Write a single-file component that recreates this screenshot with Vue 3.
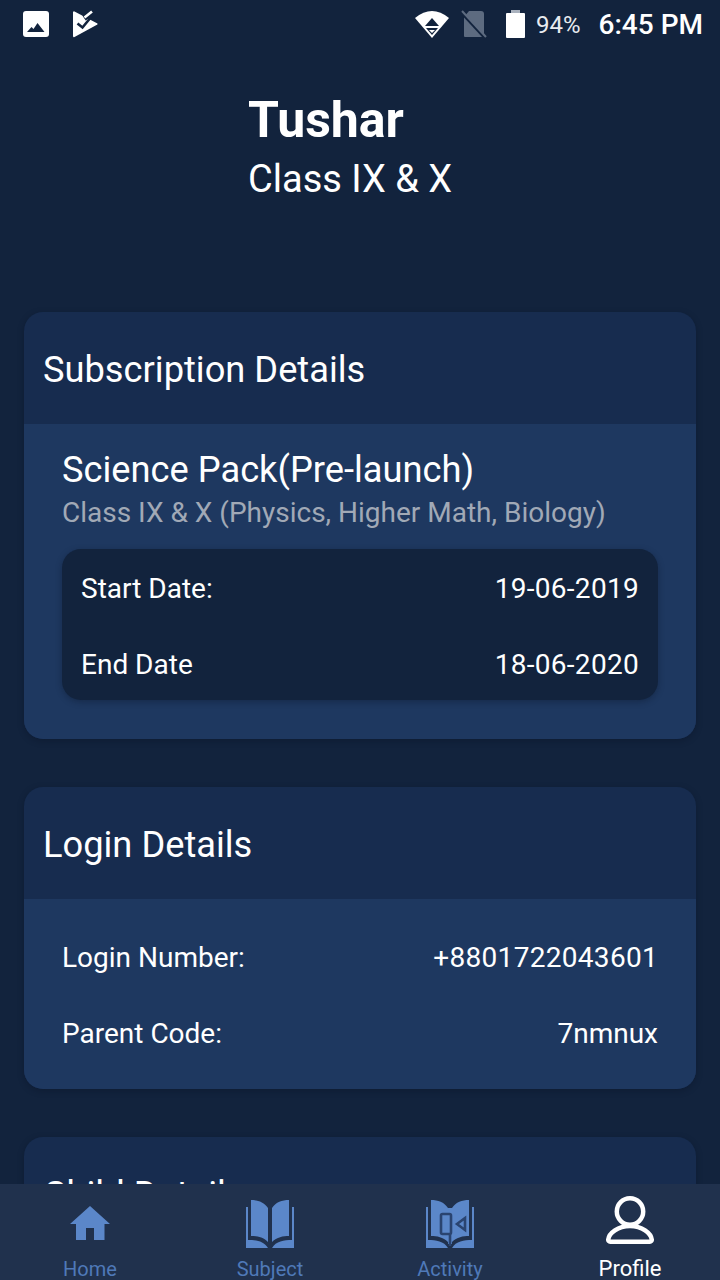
<script setup>
const tabs = [
  { label: 'Home', icon: 'home' },
  { label: 'Subject', icon: 'book' },
  { label: 'Activity', icon: 'video' },
  { label: 'Profile', icon: 'user', active: true }
]
</script>

<template>
  <div class="page">
    <div class="scroll">
      <div class="status">
        <div class="status-left">
          <svg width="26" height="26" viewBox="0 0 26 26">
            <rect width="26" height="26" rx="3" fill="#fff" />
            <path d="M4 21l4.500-5 2 2 4-6 7 9z" fill="#12233d" />
          </svg>
          <svg width="26" height="28" viewBox="0 0 26 28">
            <path d="M1 2.500a1 1 0 0 1 1.500-1L24.500 13a1 1 0 0 1 0 2L2.500 27a1 1 0 0 1-1.500-1z" fill="#fff" />
            <path d="M5.500 13.500l5 4 9-11" fill="none" stroke="#12233d" stroke-width="2.600" />
            <path d="M12 8l3-2" fill="none" stroke="#12233d" stroke-width="6" />
            <path d="M12.500 7.500L20 1.500" fill="none" stroke="#fff" stroke-width="2.600" />
          </svg>
        </div>
        <div class="status-right">
          <svg class="ic-wifi" width="34" height="28" viewBox="0 0 34 28">
            <path d="M0 8Q17-6 34 8L17 28z" fill="#fff" />
            <path d="M17 8l7 8H10z" fill="#12233d" />
            <path d="M11 18h12l-6 7z" fill="#12233d" />
            <path d="M14 20h6l-3 3z" fill="#fff" />
          </svg>
          <svg class="ic-sim" width="26" height="28" viewBox="0 0 26 28">
            <path d="M8 1h12a3 3 0 0 1 3 3v22a1 1 0 0 1-1 1H4a1 1 0 0 1-1-1V7z" fill="#5d6b80" />
            <path d="M1 3l23 25" stroke="#12233d" stroke-width="3" />
            <path d="M1 1l24 26" stroke="#5d6b80" stroke-width="2" />
          </svg>
          <svg class="ic-batt" width="19" height="28" viewBox="0 0 19 28">
            <path d="M5 3V0h9v3z" fill="#aab2be" />
            <rect y="3" width="19" height="25" rx="1" fill="#fff" />
          </svg>
          <span class="batt">94%</span>
          <span class="clock">6:45 PM</span>
        </div>
      </div>

      <div class="hero">
        <div class="name">Tushar</div>
        <div class="klass">Class IX &amp; X</div>
      </div>

      <section class="card">
        <h2 class="card-title">Subscription Details</h2>
        <div class="card-body pack">
          <div class="pack-title">Science Pack(Pre-launch)</div>
          <div class="pack-sub">Class IX &amp; X (Physics, Higher Math, Biology)</div>
          <div class="dates">
            <div class="row"><span>Start Date:</span><span class="num">19-06-2019</span></div>
            <div class="row"><span>End Date</span><span class="num">18-06-2020</span></div>
          </div>
        </div>
      </section>

      <section class="card">
        <h2 class="card-title">Login Details</h2>
        <div class="card-body login">
          <div class="row"><span>Login Number:</span><span class="num">+8801722043601</span></div>
          <div class="row"><span>Parent Code:</span><span>7nmnux</span></div>
        </div>
      </section>

      <section class="card">
        <h2 class="card-title">Child Details</h2>
      </section>
    </div>

    <nav class="nav">
      <div v-for="t in tabs" :key="t.label" class="tab" :class="{ active: t.active }">
        <svg v-if="t.icon === 'home'" class="tab-ic" width="48" height="48" viewBox="0 0 48 48">
          <path fill-rule="evenodd" d="M24 6L44 24H38.500V40H10V24H4zM20 28v12h8V28z" fill="#5b87c9" />
        </svg>
        <svg v-else-if="t.icon === 'book'" class="tab-ic" width="48" height="48" viewBox="0 0 48 48">
          <path d="M5 0c7 0 13 2 17 8v34c-5-5-11-6-17-6z" fill="#5b87c9" />
          <path d="M43 0c-7 0-13 2-17 8v34c5-5 11-6 17-6z" fill="#5b87c9" />
          <path d="M0 7h2v33c8 0 16 1 20 8H0z" fill="#5b87c9" />
          <path d="M48 7h-2v33c-8 0-16 1-20 8h22z" fill="#5b87c9" />
        </svg>
        <svg v-else-if="t.icon === 'video'" class="tab-ic" width="48" height="48" viewBox="0 0 48 48">
          <path d="M5 0c7 0 13 2 17 8v34c-5-5-11-6-17-6z" fill="#5b87c9" />
          <path d="M43 0c-7 0-13 2-17 8v34c5-5 11-6 17-6z" fill="#5b87c9" />
          <path d="M0 7h2v33c8 0 16 1 20 8H0z" fill="#5b87c9" />
          <path d="M48 7h-2v33c-8 0-16 1-20 8h22z" fill="#5b87c9" />
          <path d="M22 8h4v36h-4z" fill="#5b87c9" />
          <rect x="15" y="14" width="10" height="20" rx="1.500" fill="none" stroke="#2a4470" stroke-width="2.600" />
          <path d="M39 18l-8 6 8 6z" fill="none" stroke="#2a4470" stroke-width="2.600" />
          <path d="M24 34v12" stroke="#2a4470" stroke-width="2.600" />
        </svg>
        <svg v-else class="tab-ic raised" width="48" height="48" viewBox="0 0 48 48">
          <circle cx="24" cy="15.500" r="13.200" fill="none" stroke="#fff" stroke-width="4.500" />
          <path d="M24 30C12 30 3 37 2.250 43.500a2 2 0 0 0 2 2.250h39.500a2 2 0 0 0 2-2.250C45 37 36 30 24 30z" fill="none" stroke="#fff" stroke-width="4.500" />
        </svg>
        <span class="tab-label">{{ t.label }}</span>
      </div>
    </nav>
  </div>
</template>

<style scoped>
* { box-sizing: border-box; }
.page {
  width: 720px;
  height: 1280px;
  display: flex;
  flex-direction: column;
  overflow: hidden;
  background: #12233d;
  font-family: Roboto, "Liberation Sans", sans-serif;
  color: #fff;
}
.scroll {
  flex: 1;
  min-height: 0;
  overflow: hidden;
  padding: 0 24px;
}
.status {
  height: 48px;
  margin: 0 -24px;
  padding: 0 17px 0 23px;
  display: flex;
  justify-content: space-between;
  align-items: center;
}
.status-left {
  display: flex;
  align-items: center;
  gap: 23px;
}
.status-right {
  display: flex;
  align-items: center;
}
.ic-wifi { margin-right: 12px; }
.ic-sim { margin-right: 19px; }
.ic-batt { margin-right: 11px; }
.batt {
  font-size: 24px;
  color: #e8ebef;
  margin-right: 18px;
  padding-top: 1px;
}
.clock {
  font-size: 28px;
  font-weight: 500;
}
.hero {
  height: 264px;
  padding: 43px 0 0 224px;
}
.name {
  font-size: 50px;
  font-weight: 700;
  line-height: 58px;
}
.klass {
  font-size: 38px;
  line-height: 60px;
}
.card {
  border-radius: 19px;
  overflow: hidden;
  background: #172c4f;
  margin-bottom: 48px;
  box-shadow: 0 2px 6px rgba(8, 18, 34, 0.35);
}
.card-title {
  margin: 0;
  height: 112px;
  padding-left: 19px;
  font-size: 36.250px;
  font-weight: 400;
  line-height: 115px;
}
.card-body {
  background: #1e3860;
}
.pack {
  height: 315px;
  padding: 22px 38px 0;
}
.pack-title {
  font-size: 36.250px;
  line-height: 48px;
}
.pack-sub {
  font-size: 28px;
  line-height: 38px;
  color: #a1a9b6;
}
.dates {
  margin-top: 17px;
  height: 151px;
  padding: 1px 19px 0;
  border-radius: 19px;
  background: #12233d;
  box-shadow: 0 2px 6px rgba(8, 18, 34, 0.35);
}
.row {
  height: 76px;
  display: flex;
  justify-content: space-between;
  align-items: center;
  font-size: 28px;
}
.num { letter-spacing: 0.3px; }
.login {
  height: 190px;
  padding: 20px 38px 0;
}
.nav {
  flex: none;
  height: 96px;
  background: #20314d;
  display: flex;
}
.tab {
  flex: 1;
  display: flex;
  flex-direction: column;
  align-items: center;
  padding-top: 16px;
}
.tab-ic { flex: none; display: block; }
.tab-ic.raised { margin: -4px 0 4px; }
.tab-label {
  margin-top: 9px;
  font-size: 20px;
  line-height: 24px;
  color: #4f79b8;
}
.active .tab-label {
  font-size: 22px;
  color: #fff;
}
</style>
